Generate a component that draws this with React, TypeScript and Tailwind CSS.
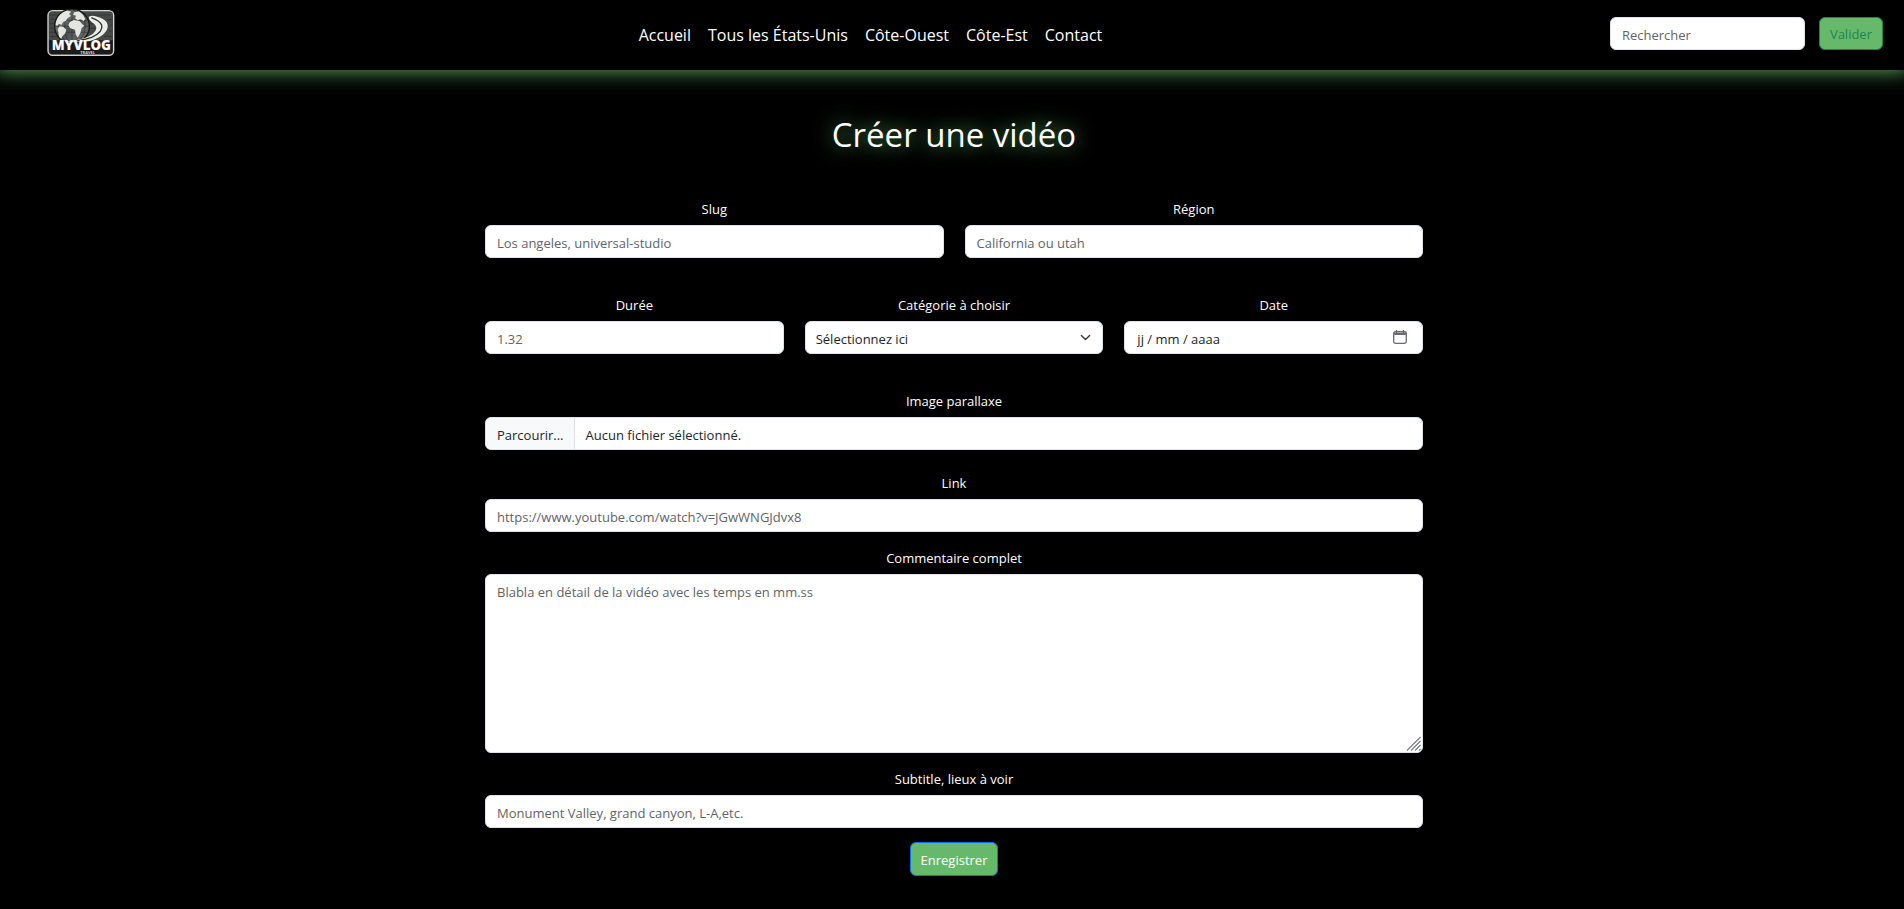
import type { ReactNode } from "react";

const navLinks = ["Accueil", "Tous les États-Unis", "Côte-Ouest", "Côte-Est", "Contact"];

const box =
  "block w-full rounded-md border border-[#dee2e6] bg-white text-[13px] leading-[21px] text-[#212529] placeholder:opacity-100";
const control = `${box} h-[33px] px-[11px] pt-[2px] placeholder:text-[#5f6469]`;

function Logo() {
  return (
    <svg viewBox="0 0 204 144" className="h-12 w-[68px]" role="img" aria-label="My Vlog Travel">
      <defs>
        <clipPath id="globe-clip">
          <circle cx="75" cy="52" r="50" />
        </clipPath>
        <linearGradient id="globe-fill" x1="0" y1="0" x2="1" y2="1">
          <stop offset="0" stopColor="#a0a3a2" />
          <stop offset="0.5" stopColor="#4c4e4e" />
          <stop offset="1" stopColor="#7a7a7a" />
        </linearGradient>
      </defs>
      <rect x="3" y="5" width="197" height="134" rx="14" fill="#474948" stroke="#d4d4d2" strokeWidth="4" />
      <g stroke="#2b2d2c" strokeWidth="2">
        <path d="M8 18H40M8 31H28M8 44H24M8 57H24M8 70H28M8 83H36M190 18H120M196 32H180M196 48H188M196 66H186M196 82H172M150 58H126M140 44H128M150 32H124" />
      </g>
      <path d="M6 94H197V126Q197 135 187 135H17Q7 135 7 126Z" fill="#1a1b1b" />
      <circle cx="75" cy="52" r="52" fill="url(#globe-fill)" stroke="#161717" strokeWidth="4" />
      <g clipPath="url(#globe-clip)">
        <g stroke="#2a2b2b" strokeWidth="2" fill="none" opacity="0.8">
          <ellipse cx="75" cy="52" rx="22" ry="50" />
          <ellipse cx="75" cy="52" rx="40" ry="50" />
          <path d="M22 34H128M22 52H128M22 70H128M75 0V104" />
        </g>
        <g fill="#e4e4e2">
          <path d="M26 38L32 22L46 10L60 4L72 8L66 15L72 21L62 27L56 36L48 39L44 47L36 45L30 50L25 47Z" />
          <path d="M38 52L48 53L58 62L55 73L46 82L41 94L36 85L34 70L32 60Z" />
          <path d="M82 10L96 7L108 17L115 30L110 36L100 31L92 34L84 28L87 20L78 17Z" />
          <path d="M68 40L80 33L98 36L106 46L112 50L104 57L100 72L92 86L86 76L84 62L70 58L64 49Z" />
        </g>
      </g>
      <path
        d="M128 22C136 17 151 22 166 29C184 38 186 53 177 67C164 84 148 90 126 97L56 99C92 93 120 88 138 74C152 62 150 51 139 43C128 35 122 27 128 22Z"
        fill="#ededeb"
      />
      <path
        d="M133 26C146 31 160 38 164 48C168 62 154 76 134 85C118 91 98 94 82 97"
        fill="none"
        stroke="#303231"
        strokeWidth="4"
      />
      <text textAnchor="middle" fontFamily="'Open Sans', sans-serif" fill="#fafafa">
        <tspan x="103" y="123" fontWeight="800" fontSize="40">
          MYVLOG
        </tspan>
        <tspan x="122" y="135" fontWeight="700" fontSize="12" fill="#d0d0d0">
          TRAVEL
        </tspan>
      </text>
    </svg>
  );
}

function Field({ id, label, children }: { id: string; label: string; children: ReactNode }) {
  return (
    <div className="min-w-0 flex-1">
      <label htmlFor={id} className="mb-[5px] block text-center text-[13px] leading-[21px] text-white">
        {label}
      </label>
      {children}
    </div>
  );
}

export default function App() {
  return (
    <div className="min-h-screen overflow-x-hidden bg-black font-['Open_Sans','Noto_Sans',sans-serif] text-white">
      <header className="relative flex min-h-[70px] items-center justify-between bg-black pr-[21px] pl-[47px] shadow-[0_-5px_20px_5px_#66b96a]">
        <a href="#" className="-mt-1">
          <Logo />
        </a>
        <nav className="flex items-center gap-[17px] pl-4 text-base">
          {navLinks.map((link) => (
            <a key={link} href="#" className="whitespace-nowrap">
              {link}
            </a>
          ))}
        </nav>
        <form className="flex shrink-0 gap-[14px] pb-[3px]" onSubmit={(e) => e.preventDefault()}>
          <div className="w-[195px]">
            <input type="search" aria-label="Rechercher" placeholder="Rechercher" className={control} />
          </div>
          <button
            type="submit"
            className="h-[33px] rounded-md border border-[#198754] bg-[#66b96a] px-[10px] pt-[2px] text-[13px] text-[#198754]"
          >
            Valider
          </button>
        </form>
      </header>

      <main className="pt-10 pb-8 pl-1">
        <h1 className="text-center text-[33px] leading-[50px] [text-shadow:0_0_20px_#66b96a]">Créer une vidéo</h1>

        <form className="mx-auto mt-[39px] w-full max-w-[938px]" onSubmit={(e) => e.preventDefault()}>
          <div className="flex gap-[21px]">
            <Field id="slug" label="Slug">
              <input id="slug" type="text" placeholder="Los angeles, universal-studio" className={control} />
            </Field>
            <Field id="region" label="Région">
              <input id="region" type="text" placeholder="California ou utah" className={control} />
            </Field>
          </div>

          <div className="mt-[37px] flex gap-[21px]">
            <Field id="duree" label="Durée">
              <input id="duree" type="text" placeholder="1.32" className={control} />
            </Field>
            <Field id="categorie" label="Catégorie à choisir">
              <div className="relative">
                <select id="categorie" className={`${box} h-[33px] appearance-none px-[10px] pt-1`}>
                  <option>Sélectionnez ici</option>
                </select>
                <svg
                  viewBox="0 0 16 16"
                  className="pointer-events-none absolute top-[11px] right-3 h-[11px] w-[11px]"
                  fill="none"
                  stroke="#343a40"
                  strokeWidth="2"
                  strokeLinecap="round"
                  strokeLinejoin="round"
                >
                  <path d="m2 5 6 6 6-6" />
                </svg>
              </div>
            </Field>
            <Field id="date" label="Date">
              <div className="relative">
                <input
                  id="date"
                  type="text"
                  placeholder="jj / mm / aaaa"
                  className={`${box} h-[33px] px-3 pt-[2px] placeholder:text-[#212529]`}
                />
                <button type="button" aria-label="Ouvrir le calendrier" className="absolute top-[9px] right-4">
                  <svg viewBox="0 0 14 14" className="block h-[14px] w-[14px]">
                    <path d="M3.500 0v3M10.500 0v3" stroke="#6b6b70" strokeWidth="1.300" />
                    <rect x="0.700" y="1.700" width="12.600" height="11.600" rx="1.800" fill="none" stroke="#6b6b70" strokeWidth="1.300" />
                    <path d="M0.700 2.500h12.600v2.500h-12.600z" fill="#6b6b70" />
                  </svg>
                </button>
              </div>
            </Field>
          </div>

          <div className="mt-[37px]">
            <Field id="image" label="Image parallaxe">
              <input id="image" type="file" className="peer sr-only" />
              <label
                htmlFor="image"
                className="flex h-[33px] w-full cursor-pointer items-center overflow-hidden rounded-md border border-[#dee2e6] bg-white text-[13px] leading-[21px] text-[#212529]"
              >
                <span className="flex h-full items-center border-r border-[#dee2e6] bg-[#f8f9fa] pt-[3px] pr-[10px] pl-[11px]">
                  Parcourir...
                </span>
                <span className="px-[11px] pt-[3px]">Aucun fichier sélectionné.</span>
              </label>
            </Field>
          </div>

          <div className="mt-[23px]">
            <Field id="link" label="Link">
              <input
                id="link"
                type="url"
                placeholder="https://www.youtube.com/watch?v=JGwWNGJdvx8"
                className={control}
              />
            </Field>
          </div>

          <div className="mt-4">
            <Field id="commentaire" label="Commentaire complet">
              <div className="relative">
                <textarea
                  id="commentaire"
                  rows={8}
                  placeholder="Blabla en détail de la vidéo avec les temps en mm.ss"
                  className={`${box} h-[179px] resize-none px-[11px] py-[7px] placeholder:text-[#5f6469]`}
                />
                <svg
                  viewBox="0 0 15 15"
                  className="pointer-events-none absolute right-[2px] bottom-[2px] h-[15px] w-[15px]"
                  stroke="#77777c"
                  strokeWidth="1.100"
                >
                  <path d="M1 14.500 14.500 1M5 14.500 14.500 5M9 14.500 14.500 9M13 14.500 14.500 13" />
                </svg>
              </div>
            </Field>
          </div>

          <div className="mt-4">
            <Field id="subtitle" label="Subtitle, lieux à voir">
              <input
                id="subtitle"
                type="text"
                placeholder="Monument Valley, grand canyon, L-A,etc."
                className={control}
              />
            </Field>
          </div>

          <div className="mt-[14px] text-center">
            <button
              type="submit"
              className="h-[34px] rounded-md border border-[#0d6efd] bg-[#66b96a] px-[10px] pt-[3px] text-[13px] text-white"
            >
              Enregistrer
            </button>
          </div>
        </form>
      </main>
    </div>
  );
}
